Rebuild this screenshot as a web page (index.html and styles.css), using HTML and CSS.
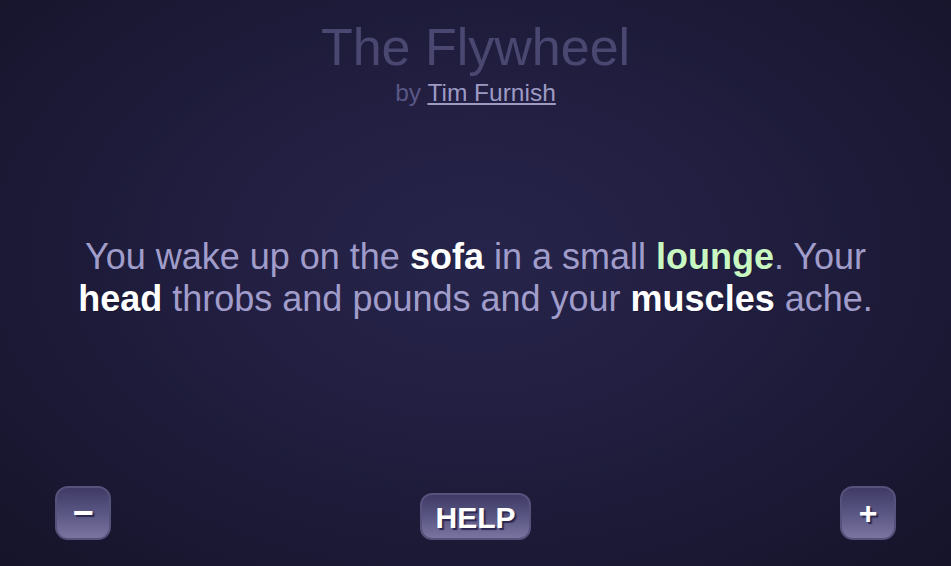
FILE: index.html
```html
<!DOCTYPE html>
<html>
<head>
<meta charset="utf-8">
<title>The Flywheel</title>
<link rel="stylesheet" href="styles.css">
</head>
<body>
<div class="page">
  <header class="header">
    <h1 class="title">The Flywheel</h1>
    <div class="byline">by <a class="author" href="#">Tim Furnish</a></div>
  </header>
  <main class="story">
    <p class="passage">You wake up on the <b class="obj">sofa</b> in a small <b class="place">lounge</b>. Your <b class="obj">head</b> throbs and pounds and your <b class="obj">muscles</b> ache.</p>
  </main>
  <footer class="controls">
    <button class="btn btn-square btn-minus">&minus;</button>
    <button class="btn btn-help">HELP</button>
    <button class="btn btn-square">+</button>
  </footer>
</div>
</body>
</html>
```
FILE: styles.css
```css
html, body {
  margin: 0;
  padding: 0;
  height: 100%;
}
body {
  background: radial-gradient(ellipse at 50% 45%, #27244b 0%, #221f42 35%, #1a1833 75%, #161429 100%);
  font-family: "Liberation Sans", Arial, Helvetica, sans-serif;
  overflow: hidden;
}
.page {
  height: 566px;
  display: flex;
  flex-direction: column;
}
.header {
  text-align: center;
  padding-top: 21px;
}
.title {
  margin: 0;
  font-size: 52px;
  font-weight: normal;
  line-height: 1;
  color: #4a4770;
}
.byline {
  font-size: 24.5px;
  line-height: 1;
  color: #5a5786;
  margin-top: 8px;
}
.author {
  color: #9d9ac4;
  text-decoration: underline;
}
.story {
  flex: 1;
  display: flex;
  align-items: center;
  justify-content: center;
  padding: 0 65px 36px 65px;
}
.passage {
  margin: 0;
  text-align: center;
  font-size: 36px;
  line-height: 42px;
  color: #a19dcb;
}
.obj {
  color: #ffffff;
  text-shadow: 1px 1px 0 rgba(10, 8, 30, 0.35);
}
.place {
  color: #c9f7c2;
  text-shadow: 1px 1px 0 rgba(10, 8, 30, 0.35);
}
.controls {
  display: flex;
  justify-content: space-between;
  align-items: flex-end;
  padding: 0 55px 26px 55px;
}
.btn {
  font-family: "Liberation Sans", Arial, Helvetica, sans-serif;
  font-weight: bold;
  color: #ffffff;
  text-shadow: 2px 2px 1px #2a2752;
  border: 2px solid #56527c;
  background: linear-gradient(to bottom, #3f3b66 0%, #5a5683 50%, #7a759f 100%);
  padding: 0;
  display: flex;
  align-items: center;
  justify-content: center;
  cursor: pointer;
}
.btn-square {
  width: 56px;
  height: 54px;
  border-radius: 13px;
  font-size: 32px;
}
.btn-minus {
  font-size: 36px;
}
.btn-help {
  width: 111px;
  height: 47px;
  border-radius: 12px;
  font-size: 30px;
  padding-top: 2px;
}
```
